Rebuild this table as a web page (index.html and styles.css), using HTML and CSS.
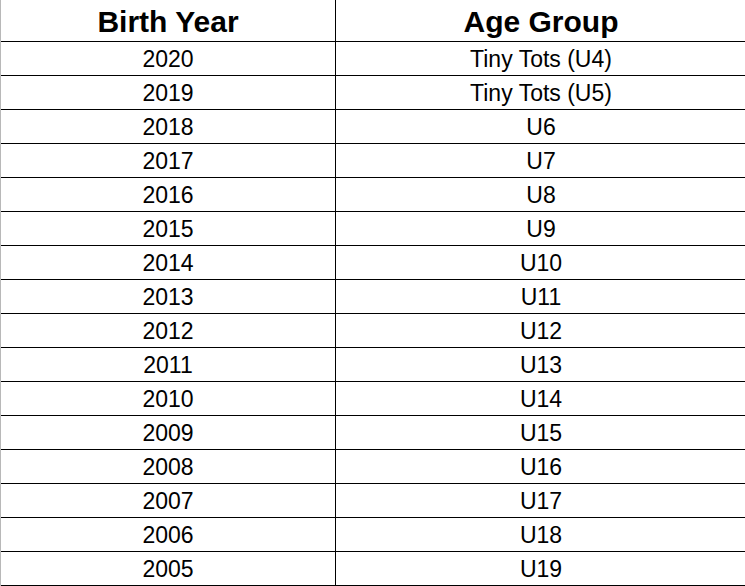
FILE: index.html
```html
<!DOCTYPE html>
<html>
<head>
<meta charset="utf-8">
<link rel="stylesheet" href="styles.css">
</head>
<body>
<div class="table">
  <div class="cell head first">Birth Year</div><div class="cell head">Age Group</div>
  <div class="cell first">2020</div><div class="cell">Tiny Tots (U4)</div>
  <div class="cell first">2019</div><div class="cell">Tiny Tots (U5)</div>
  <div class="cell first">2018</div><div class="cell">U6</div>
  <div class="cell first">2017</div><div class="cell">U7</div>
  <div class="cell first">2016</div><div class="cell">U8</div>
  <div class="cell first">2015</div><div class="cell">U9</div>
  <div class="cell first">2014</div><div class="cell">U10</div>
  <div class="cell first">2013</div><div class="cell">U11</div>
  <div class="cell first">2012</div><div class="cell">U12</div>
  <div class="cell first">2011</div><div class="cell">U13</div>
  <div class="cell first">2010</div><div class="cell">U14</div>
  <div class="cell first">2009</div><div class="cell">U15</div>
  <div class="cell first">2008</div><div class="cell">U16</div>
  <div class="cell first">2007</div><div class="cell">U17</div>
  <div class="cell first">2006</div><div class="cell">U18</div>
  <div class="cell first">2005</div><div class="cell">U19</div>
</div>
</body>
</html>
```
FILE: styles.css
```css
html, body {
  margin: 0;
  padding: 0;
  background: #ffffff;
}
body {
  font-family: "Liberation Sans", Arial, sans-serif;
  color: #000000;
  overflow: hidden;
}
.table {
  display: grid;
  grid-template-columns: 335px 1fr;
  grid-template-rows: 42px;
  grid-auto-rows: 34px;
  border-left: 1px solid #b8b8b8;
  width: 746px;
  box-sizing: border-box;
}
.cell {
  box-sizing: border-box;
  border-bottom: 1px solid #000000;
  display: flex;
  align-items: center;
  justify-content: center;
  font-size: 23px;
  line-height: 1;
  padding-top: 1px;
}
.first {
  border-right: 1px solid #000000;
}
.head {
  font-size: 30px;
  font-weight: bold;
  padding-top: 2px;
}
```
